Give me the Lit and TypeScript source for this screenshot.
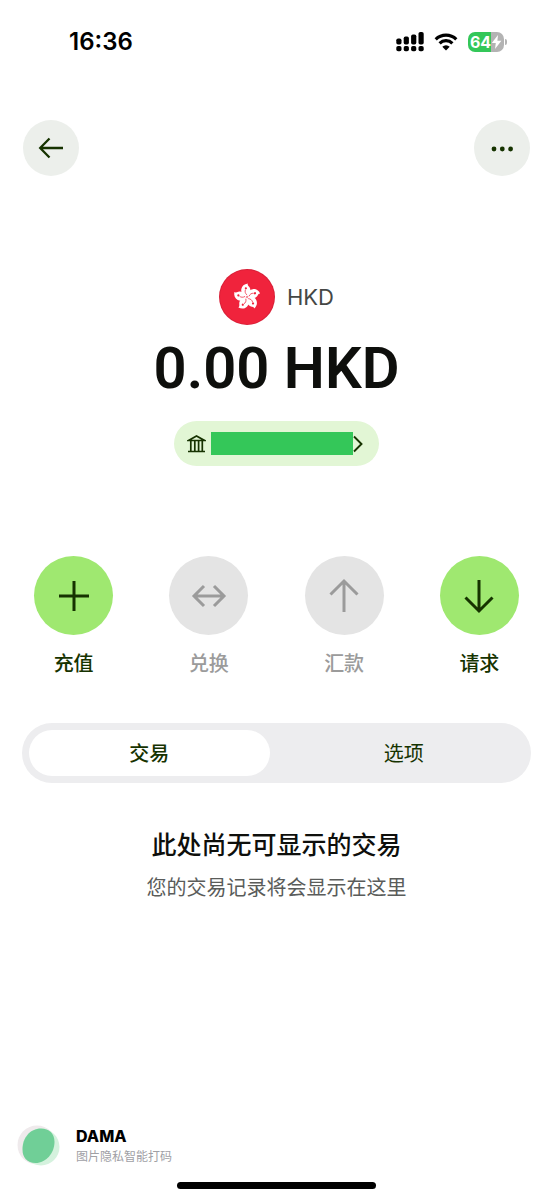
import { LitElement, html, css, svg } from "lit";
import { customElement, property, state } from "lit/decorators.js";
import { classMap } from "lit/directives/class-map.js";

const icons = {
  add: svg`<path d="M20 5v30M5 20h30" />`,
  convert: svg`<path d="M5 20h30M15 10 5 20l10 10M25 10l10 10-10 10" />`,
  send: svg`<path d="M20 36V5M6.500 18.500 20 5l13.500 13.500" />`,
  request: svg`<path d="M20 4v31M6.500 21.500 20 35l13.500-13.500" />`,
};

@customElement("action-button")
export class ActionButton extends LitElement {
  @property() icon: keyof typeof icons = "add";
  @property() label = "";
  @property({ type: Boolean }) disabled = false;

  static styles = css`
    :host {
      display: block;
    }
    .action {
      display: flex;
      flex-direction: column;
      align-items: center;
      gap: 13px;
      width: 100%;
      padding: 0;
      border: 0;
      background: none;
      color: #163300;
      font: 500 20px/32px Inter, "Noto Sans CJK SC", sans-serif;
      cursor: pointer;
    }
    .disc {
      display: grid;
      place-items: center;
      width: 79px;
      height: 79px;
      border-radius: 50%;
      background: #9fe870;
    }
    .action:disabled {
      color: #9b9b9b;
      cursor: default;
    }
    .action:disabled .disc {
      background: #e4e4e4;
    }
    svg {
      width: 40px;
      height: 40px;
      fill: none;
      stroke: currentColor;
      stroke-width: 3;
    }
  `;

  render() {
    return html`<button class="action" type="button" ?disabled=${this.disabled}>
      <span class="disc"><svg viewBox="0 0 40 40" aria-hidden="true">${icons[this.icon]}</svg></span>
      <span>${this.label}</span>
    </button>`;
  }
}

@customElement("status-bar")
export class StatusBar extends LitElement {
  static styles = css`
    :host {
      display: flex;
      justify-content: space-between;
      align-items: center;
      height: 32px;
      padding: 26px 46px 0 69px;
      color: #000;
      font-family: Inter, sans-serif;
    }
    .time {
      font-size: 24px;
      line-height: 32px;
      font-weight: 600;
    }
    .indicators {
      display: flex;
      align-items: center;
      gap: 10px;
    }
    .battery {
      display: flex;
      align-items: center;
      gap: 1px;
    }
    .cell {
      display: flex;
      align-items: center;
      justify-content: center;
      width: 36px;
      height: 20px;
      border-radius: 7px;
      background: linear-gradient(90deg, #34c759 64%, #b3b3b3 64%);
      color: #fff;
      font-size: 16px;
      line-height: 20px;
      font-weight: 700;
    }
    .tip {
      width: 2px;
      height: 6px;
      border-radius: 0 2px 2px 0;
      background: #b3b3b3;
    }
  `;

  render() {
    return html`
      <span class="time">16:36</span>
      <div class="indicators">
        <svg width="28" height="20" viewBox="0 0 28 20" aria-hidden="true">
          <rect x="0.300" y="6.500" width="5.200" height="6" rx="1.800" />
          <rect x="7.700" y="4.500" width="5.200" height="8" rx="1.800" />
          <rect x="15.100" y="2.500" width="5.200" height="10" rx="1.800" />
          <rect x="22.500" y="0" width="5.200" height="12.500" rx="1.800" />
          <rect x="0.300" y="14" width="5.200" height="5.200" rx="1.800" />
          <rect x="7.700" y="14" width="5.200" height="5.200" rx="1.800" />
          <rect x="15.100" y="14" width="5.200" height="5.200" rx="1.800" />
          <rect x="22.500" y="14" width="5.200" height="5.200" rx="1.800" />
        </svg>
        <svg width="24" height="18" viewBox="0 0 24 18" aria-hidden="true">
          <path d="M1.700 6.300a14.800 14.800 0 0 1 20.600 0M5.600 10.300a9.200 9.200 0 0 1 12.800 0" fill="none" stroke="#000" stroke-width="3.200" />
          <path d="M12 17.500 8.300 13.700a5.300 5.300 0 0 1 7.400 0Z" />
        </svg>
        <div class="battery">
          <div class="cell">
            <span>64</span>
            <svg width="11" height="14" viewBox="0 0 11 14" aria-hidden="true">
              <path d="M7 0 .8 8h4L4 14l6.400-8.200h-4Z" fill="#fff" />
            </svg>
          </div>
          <div class="tip"></div>
        </div>
      </div>
    `;
  }
}

@customElement("app-root")
export class AppRoot extends LitElement {
  @state() private tab = 0;

  static styles = css`
    :host {
      display: flex;
      flex-direction: column;
      min-height: 100vh;
      background: #fff;
      color: #0e0f0c;
      font-family: Inter, "Noto Sans CJK SC", sans-serif;
    }
    button {
      padding: 0;
      border: 0;
      font-family: inherit;
      color: #163300;
      cursor: pointer;
    }
    h1,
    h2,
    p {
      margin: 0;
    }
    .toolbar {
      display: flex;
      justify-content: space-between;
      padding: 62px 23px 0;
    }
    .round {
      display: grid;
      place-items: center;
      width: 56px;
      height: 56px;
      border-radius: 50%;
      background: #ecefeb;
    }
    main {
      display: flex;
      flex-direction: column;
      flex: 1;
    }
    .balance {
      display: flex;
      flex-direction: column;
      align-items: center;
      padding-top: 93px;
    }
    .currency {
      display: flex;
      align-items: center;
      gap: 12px;
      color: #454745;
      font-size: 22px;
      line-height: 32px;
    }
    .amount {
      margin-top: 8px;
      font-family: Roboto, Inter, sans-serif;
      font-size: 58px;
      line-height: 70px;
      font-weight: 600;
    }
    .account {
      display: flex;
      align-items: center;
      height: 45px;
      margin-top: 18px;
      padding: 0 16px 0 13px;
      border-radius: 23px;
      background: #e2f6d5;
    }
    .masked {
      width: 142px;
      height: 23px;
      margin-left: 5px;
      background: #34c759;
    }
    .actions {
      display: grid;
      grid-template-columns: repeat(4, 1fr);
      padding: 90px 6px 0;
    }
    .tabs {
      display: grid;
      grid-template-columns: 1fr 1fr;
      gap: 14px;
      margin: 43px 22px 0;
      padding: 7px;
      border-radius: 30px;
      background: #ededef;
    }
    .tab {
      height: 46px;
      padding-top: 2px;
      border-radius: 23px;
      background: none;
      font-size: 20px;
      line-height: 32px;
    }
    .selected {
      background: #fff;
      font-weight: 500;
    }
    .empty {
      padding-top: 44px;
      text-align: center;
    }
    .empty h2 {
      font-size: 25px;
      line-height: 36px;
      font-weight: 500;
    }
    .empty p {
      margin-top: 9px;
      color: #5a5c5a;
      font-size: 20px;
      line-height: 32px;
    }
    .credit {
      display: flex;
      align-items: center;
      gap: 15px;
      padding: 0 16px;
    }
    .credit strong,
    .credit small {
      display: block;
    }
    .credit strong {
      color: #000;
      font-size: 16px;
      line-height: 22px;
      font-weight: 800;
    }
    .credit small {
      color: #a0a0a5;
      font-size: 12px;
      line-height: 20px;
    }
    .home {
      align-self: center;
      width: 36%;
      height: 7px;
      margin: 14px 0 11px;
      border-radius: 4px;
      background: #000;
    }
  `;

  private petals() {
    return [-6, 66, 138, 210, 282].map(
      (a) => svg`<g transform="rotate(${a} 28 28)">
        <path d="M27.800 27.500c-4-1.600-5.600-4.700-4.600-8 .9-3 3.400-4.800 7-4.900-.7 1.500.4 2.400 1.200 3.800 1.800 3.300.200 6.800-3.600 9.100Z" fill="#fff" />
        <path d="M28.200 26c-1.600-1.800-2-3.800-.9-5.500" fill="none" stroke="#f0233c" stroke-width="0.700" />
        <circle cx="27.800" cy="19.200" r="1.100" fill="#f0233c" />
      </g>`,
    );
  }

  render() {
    return html`
      <status-bar></status-bar>
      <header class="toolbar">
        <button class="round" type="button" aria-label="返回">
          <svg width="28" height="28" viewBox="0 0 28 28" fill="none" stroke="currentColor" stroke-width="2.300" aria-hidden="true">
            <path d="M26 14H3.500M12.500 4.500 3.200 14l9.300 9.500" />
          </svg>
        </button>
        <button class="round" type="button" aria-label="更多">
          <svg width="28" height="28" viewBox="0 0 28 28" fill="currentColor" aria-hidden="true">
            <circle cx="6" cy="15" r="2.400" /><circle cx="14.300" cy="15" r="2.400" /><circle cx="22.600" cy="15" r="2.400" />
          </svg>
        </button>
      </header>
      <main>
        <section class="balance">
          <div class="currency">
            <svg width="56" height="56" viewBox="0 0 56 56" aria-hidden="true">
              <circle cx="28" cy="28" r="28" fill="#d92038" />
              <circle cx="28" cy="28" r="27" fill="#f0233c" />
              ${this.petals()}
            </svg>
            <span>HKD</span>
          </div>
          <h1 class="amount">0.00 HKD</h1>
          <button class="account" type="button" aria-label="账户详情">
            <svg width="19" height="20" viewBox="0 0 19 20" fill="none" stroke="currentColor" stroke-width="1.700" aria-hidden="true">
              <path d="M1.500 6.500 9.500 2l8 4.500ZM3.800 7v10M7.800 7v10M11.600 7v10M15.300 7v10M1 17.500h17" />
            </svg>
            <span class="masked"></span>
            <svg width="10" height="20" viewBox="0 0 10 20" fill="none" stroke="currentColor" stroke-width="1.900" aria-hidden="true">
              <path d="M1 2.500 8.500 10 1 17.500" />
            </svg>
          </button>
        </section>
        <section class="actions">
          <action-button icon="add" label="充值"></action-button>
          <action-button icon="convert" label="兑换" disabled></action-button>
          <action-button icon="send" label="汇款" disabled></action-button>
          <action-button icon="request" label="请求"></action-button>
        </section>
        <div class="tabs" role="tablist">
          ${["交易", "选项"].map(
            (name, i) => html`<button
              type="button"
              role="tab"
              aria-selected=${this.tab === i}
              class=${classMap({ tab: true, selected: this.tab === i })}
              @click=${() => (this.tab = i)}
            >${name}</button>`,
          )}
        </div>
        <section class="empty">
          <h2>此处尚无可显示的交易</h2>
          <p>您的交易记录将会显示在这里</p>
        </section>
      </main>
      <footer class="credit">
        <svg width="45" height="44" viewBox="0 0 45 44" aria-hidden="true">
          <circle cx="21" cy="21" r="19.500" fill="#efeaec" />
          <circle cx="25" cy="23" r="18.500" fill="#d5f2de" />
          <path d="M25 4.500c8 0 13.500 5 13.500 13.500 0 11-8.500 21-19 21C11 39 6.500 33.500 6.500 25.500 6.500 14 14 4.500 25 4.500Z" fill="#70cf97" />
        </svg>
        <div><strong>DAMA</strong><small>图片隐私智能打码</small></div>
      </footer>
      <div class="home"></div>
    `;
  }
}
